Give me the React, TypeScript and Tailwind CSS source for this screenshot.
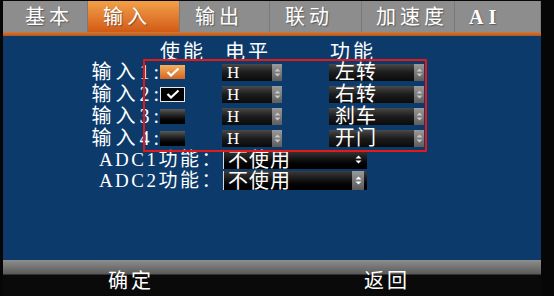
import React from "react";

const cjk = "font-['Liberation_Serif','Noto_Sans_CJK_SC',serif]";

const tabs = [
  { label: "基本", w: "w-[85px]", pl: "pl-[22px]" },
  { label: "输入", w: "w-[92px]", pl: "pl-[15px]", active: true },
  { label: "输出", w: "w-[90px]", pl: "pl-[15px]" },
  { label: "联动", w: "w-[92px]", pl: "pl-[15px]" },
  { label: "加速度", w: "w-[93px]", pl: "pl-[14px]" },
  { label: "AI", w: "w-[86px]", pl: "pl-[14px]" },
];

const rows = [
  { name: "输入1:", check: "orange", level: "H", fn: "左转" },
  { name: "输入2:", check: "on", level: "H", fn: "右转" },
  { name: "输入3:", check: "off", level: "H", fn: "刹车" },
  { name: "输入4:", check: "off", level: "H", fn: "开门" },
];

const Arrows = ({ className = "" }: { className?: string }) => (
  <svg width="7" height="9" viewBox="0 0 7 9" className={className}>
    <path d="M3.5 0.5 L6.5 3.5 L0.5 3.5 Z" fill="currentColor" />
    <path d="M3.5 8.5 L6.5 5.5 L0.5 5.5 Z" fill="currentColor" />
  </svg>
);

const Check = ({ color }: { color: string }) => (
  <svg width="14" height="10" viewBox="0 0 14 10">
    <path d="M1.5 5 L5 8.5 L12.5 1.5" fill="none" stroke={color} strokeWidth="2.2" />
  </svg>
);

const Checkbox = ({ kind }: { kind: string }) => {
  if (kind === "orange")
    return (
      <div className="w-[25px] h-[14px] bg-gradient-to-b from-[#f6b060] to-[#d2661c] flex items-center justify-center">
        <Check color="#ffffff" />
      </div>
    );
  if (kind === "on")
    return (
      <div className="w-[25px] h-[15px] bg-black border border-[#e8e8e8] flex items-center justify-center">
        <Check color="#ffffff" />
      </div>
    );
  return <div className="w-[25px] h-[15px] bg-gradient-to-b from-[#5a5a5a] via-[#1a1a1a] to-black" />;
};

const Select = ({ text, w, serif }: { text: string; w: string; serif?: boolean }) => (
  <div className={`${w} h-[17px] flex bg-gradient-to-b from-[#4a4a4a] via-[#1c1c1c] to-[#0a0a0a]`}>
    <div
      className={`flex-1 flex items-center text-white leading-none ${
        serif ? "pl-[5px] text-[17px]" : "pl-[6px] text-[20px] tracking-[1px]"
      }`}
    >
      {text}
    </div>
    <div className="w-[10px] h-full bg-gradient-to-b from-[#9a9a9a] to-[#5e5e5e] flex items-center justify-center text-[#c8c8c8]">
      <Arrows />
    </div>
  </div>
);

export default function App() {
  return (
    <div className={`relative w-[554px] h-[296px] bg-[#060606] ${cjk} overflow-hidden`}>
      <div className="ml-[3px] w-[538px] h-full flex flex-col">
        {/* tab bar */}
        <div className="mt-[1px] h-[31px] flex bg-[#8d8d8d]">
          {tabs.map((t, i) => (
            <div
              key={i}
              className={`${t.w} ${t.pl} h-full flex items-center text-white text-[20px] tracking-[4px] border-r border-[#7a7a7a] ${
                t.active ? "bg-gradient-to-b from-[#f2a048] to-[#d25a14]" : ""
              } ${t.label === "AI" ? "text-[15px] tracking-[5px] font-bold" : ""}`}
            >
              <span className="[text-shadow:1px_1px_1px_rgba(60,60,60,0.6)]">{t.label}</span>
            </div>
          ))}
        </div>
        <div className="h-[4px] bg-gradient-to-b from-[#d27a3a] to-[#b4541a]" />

        {/* body */}
        <div className="h-[224px] bg-[#0b3a6b] text-white">
          <div className="mt-[1px] h-[23px] grid grid-cols-[157px_62px_107px_95px] items-center text-[20px] tracking-[3px]">
            <div />
            <div>使能</div>
            <div className="pl-[3px]">电平</div>
            <div className="pl-[1px]">功能</div>
          </div>
          <div className="h-[1px]" />
          {rows.map((r, i) => (
            <div key={i} className="h-[22px] grid grid-cols-[157px_62px_107px_95px] items-center">
              <div className="text-right mr-[-3px] text-[20px] tracking-[4px] leading-none">{r.name}</div>
              <div>
                <Checkbox kind={r.check} />
              </div>
              <div>
                <Select text={r.level} w="w-[60px]" serif />
              </div>
              <div>
                <Select text={r.fn} w="w-[95px]" />
              </div>
            </div>
          ))}
          {["ADC1功能：", "ADC2功能："].map((l, i) => (
            <div key={i} className="h-[21px] grid grid-cols-[220px_144px] items-center">
              <div className="text-right text-[19px] tracking-[2.5px] leading-none">{l}</div>
              <div className="h-[19px] flex bg-gradient-to-b from-[#3c3c3c] via-[#121212] to-black border-l border-[#d8d8d8]">
                <div className="flex-1 pl-[4px] flex items-center text-[20px] tracking-[1px] leading-none">不使用</div>
                <div
                  className={`w-[12px] mr-[3px] flex items-center justify-center text-white ${
                    i === 1 ? "bg-gradient-to-b from-[#9a9a9a] to-[#5a5a5a]" : ""
                  }`}
                >
                  <Arrows />
                </div>
              </div>
            </div>
          ))}
        </div>

        {/* bottom bar */}
        <div className="h-[36px] flex bg-[linear-gradient(to_bottom,#8e8e8e_0px,#5a5a5a_14px,#0a0a0a_15px)] text-white text-[20px] tracking-[3px]">
          <div className="ml-[105px] pt-[6px]">确定</div>
          <div className="ml-[210px] pt-[6px]">返回</div>
        </div>
      </div>

      {/* red annotation box */}
      <div className="absolute left-[143px] top-[59px] w-[284px] h-[93px] border-2 border-[#e41a1a] rounded-[1px]" />
    </div>
  );
}
